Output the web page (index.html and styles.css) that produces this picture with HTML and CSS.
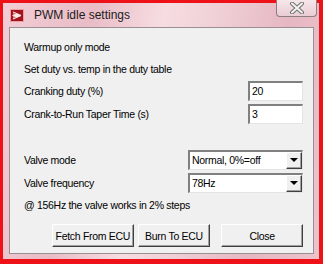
FILE: index.html
```html
<!DOCTYPE html>
<html>
<head>
  <title>PWM idle settings</title>
  <link rel="stylesheet" href="styles.css">
</head>
<body>
  <div class="screen">
    <div class="window">
      <div class="titlebar">
        <svg class="app-icon" width="14" height="13" viewBox="0 0 14 13">
          <rect x="0" y="0" width="14" height="13" fill="#a4121c"/>
          <rect x="0.5" y="0.5" width="13" height="12" fill="none" stroke="#e8a0a4"/>
          <path d="M3 3 L11 6.5 M3 5 L11 6.5 M3 8 L11 6.5 M3 10 L11 6.5 M2.5 6.5 H11" stroke="#fbe6e6" stroke-width="1.1"/>
        </svg>
        <span class="title">PWM idle settings</span>
        <div class="close-btn">
          <svg width="16" height="12" viewBox="0 0 16 12">
            <path d="M3 1.5 L13 10.5 M13 1.5 L3 10.5" stroke="#6f6f6f" stroke-width="4" stroke-linecap="round"/>
            <path d="M3 1.5 L13 10.5 M13 1.5 L3 10.5" stroke="#f4f4f4" stroke-width="2" stroke-linecap="round"/>
          </svg>
        </div>
      </div>

      <div class="client">
        <div class="row first">Warmup only mode</div>
        <div class="row second">Set duty vs. temp in the duty table</div>
        <div class="row field">
          <span>Cranking duty (%)</span>
          <div class="textbox">20</div>
        </div>
        <div class="row field">
          <span>Crank-to-Run Taper Time (s)</span>
          <div class="textbox">3</div>
        </div>

        <div class="row field spaced">
          <span>Valve mode</span>
          <div class="combo">
            <span class="combo-text">Normal, 0%=off</span>
            <span class="combo-arrow"></span>
          </div>
        </div>
        <div class="row field">
          <span>Valve frequency</span>
          <div class="combo">
            <span class="combo-text">78Hz</span>
            <span class="combo-arrow"></span>
          </div>
        </div>
        <div class="row note">@ 156Hz the valve works in 2% steps</div>

        <div class="buttons">
          <button class="btn btn-fetch">Fetch From ECU</button>
          <button class="btn btn-burn">Burn To ECU</button>
          <button class="btn btn-close">Close</button>
        </div>
      </div>
    </div>
  </div>
</body>
</html>
```

FILE: styles.css
```css
body {
  margin: 0;
  font-family: "Liberation Sans", Arial, sans-serif;
  font-size: 10.5px;
  letter-spacing: -0.3px;
  color: #000;
}

.screen {
  width: 323px;
  height: 264px;
  box-sizing: border-box;
  background-color: #ee1118;
  padding: 3px 4px 5px 3px;
}

.window {
  height: 100%;
  box-sizing: border-box;
  padding: 0 5px 5px 6px;
  display: flex;
  flex-direction: column;
  background: linear-gradient(100deg, #f2cdd5 0%, #e9bcc6 25%, #f6dde2 45%, #efd0d6 60%, #e6b7c2 80%, #ecc3cc 100%);
}

.titlebar {
  height: 24px;
  display: flex;
  align-items: center;
  position: relative;
}

.app-icon {
  margin: 0 10px 0 1px;
}

.title {
  font-size: 12px;
  letter-spacing: 0;
  color: #1c1c1c;
}

.close-btn {
  position: absolute;
  right: -3px;
  top: -3px;
  width: 41px;
  height: 17px;
  box-sizing: border-box;
  border: 1px solid #8d7e82;
  border-top: none;
  border-radius: 0 0 4px 4px;
  background: linear-gradient(#f6e7ea, #e9cdd3);
  display: flex;
  align-items: center;
  justify-content: center;
}

.client {
  flex: 1;
  background-color: #f0f0f0;
  border: 1px solid #9a8f92;
  padding: 8px 10px 0 14px;
  display: flex;
  flex-direction: column;
}

.row {
  height: 23px;
  display: flex;
  align-items: center;
  justify-content: space-between;
}

.row.first {
  height: 22px;
}

.row.second {
  height: 21px;
}

.row.spaced {
  margin-top: 23px;
}

.row.note {
  margin-top: -1px;
}

.textbox {
  width: 55px;
  height: 20px;
  box-sizing: border-box;
  background-color: #fff;
  border-top: 2px solid #808080;
  border-left: 2px solid #808080;
  border-right: 1px solid #e4e4e4;
  border-bottom: 1px solid #e4e4e4;
  padding-left: 2px;
  line-height: 17px;
}

.combo {
  width: 115px;
  height: 20px;
  box-sizing: border-box;
  background-color: #fff;
  border-top: 2px solid #808080;
  border-left: 2px solid #808080;
  border-right: 1px solid #e4e4e4;
  border-bottom: 1px solid #e4e4e4;
  display: flex;
  align-items: stretch;
  justify-content: space-between;
}

.combo-text {
  padding-left: 2px;
  line-height: 17px;
}

.combo-arrow {
  width: 16px;
  box-sizing: border-box;
  background-color: #f0f0f0;
  border-top: 1px solid #fff;
  border-left: 1px solid #fff;
  border-right: 1px solid #404040;
  border-bottom: 1px solid #404040;
  box-shadow: inset -1px -1px 0 #a0a0a0;
  display: flex;
  align-items: center;
  justify-content: center;
}

.combo-arrow::after {
  content: "";
  border-left: 4px solid transparent;
  border-right: 4px solid transparent;
  border-top: 4px solid #000;
}

.buttons {
  margin-top: 8px;
  display: flex;
  gap: 4px;
  padding-left: 28px;
}

.btn {
  height: 23px;
  box-sizing: border-box;
  font-family: "Liberation Sans", Arial, sans-serif;
  font-size: 10.5px;
  letter-spacing: -0.3px;
  white-space: nowrap;
  color: #000;
  background-color: #f0f0f0;
  border-top: 1px solid #fff;
  border-left: 1px solid #fff;
  border-right: 1px solid #404040;
  border-bottom: 1px solid #404040;
  box-shadow: inset -1px -1px 0 #a0a0a0;
  padding: 0;
}

.btn-fetch {
  width: 83px;
}

.btn-burn {
  width: 74px;
}

.btn-close {
  width: 83px;
  margin-left: 7px;
}
```
